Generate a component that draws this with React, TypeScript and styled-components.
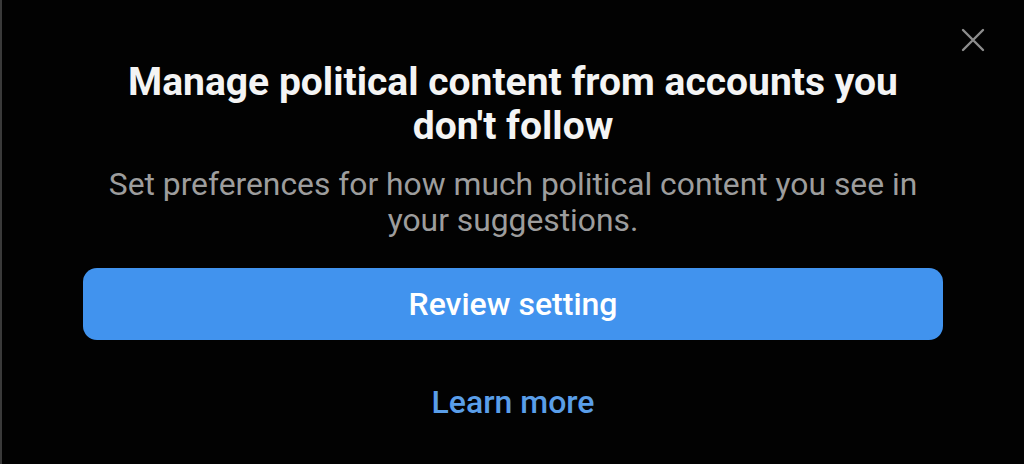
import React from "react";
import styled, { createGlobalStyle } from "styled-components";

const GlobalStyle = createGlobalStyle`
  html, body {
    margin: 0;
    padding: 0;
    background: #000;
  }
  body {
    font-family: Roboto, "Noto Sans", sans-serif;
  }
`;

const Sheet = styled.div`
  position: relative;
  box-sizing: border-box;
  width: 1024px;
  height: 464px;
  background: #020202;
  border-left: 2px solid #3a3a3a;
  display: flex;
  flex-direction: column;
  align-items: center;
  padding: 60px 81px 0 81px;
`;

const CloseButton = styled.button`
  position: absolute;
  top: 28px;
  right: 39px;
  width: 24px;
  height: 24px;
  padding: 0;
  border: none;
  background: none;
  color: #8d8d8d;
  cursor: pointer;
`;

const Title = styled.h2`
  margin: 0;
  width: 820px;
  font-size: 39px;
  line-height: 44px;
  font-weight: 700;
  color: #f4f4f4;
  text-align: center;
`;

const Subtitle = styled.p`
  margin: 18px 0 0;
  width: 830px;
  font-size: 31.8px;
  line-height: 36px;
  font-weight: 400;
  color: #9d9d9d;
  text-align: center;
`;

const PrimaryButton = styled.button`
  margin-top: 30px;
  width: 100%;
  height: 72px;
  border: none;
  border-radius: 14px;
  background: #4193ee;
  color: #fff;
  font-family: inherit;
  font-size: 32px;
  font-weight: 500;
  cursor: pointer;
`;

const LinkButton = styled.button`
  margin-top: 42px;
  border: none;
  background: none;
  padding: 0;
  color: #5a9ee9;
  font-family: inherit;
  font-size: 32px;
  line-height: 40px;
  font-weight: 500;
  cursor: pointer;
`;

const App = () => {
  return (
    <>
      <GlobalStyle />
      <Sheet>
        <CloseButton aria-label="Close">
          <svg width="24" height="24" viewBox="0 0 24 24" fill="none">
            <path
              d="M2 2L22 22M22 2L2 22"
              stroke="currentColor"
              strokeWidth="2.4"
              strokeLinecap="round"
            />
          </svg>
        </CloseButton>
        <Title>Manage political content from accounts you don't follow</Title>
        <Subtitle>
          Set preferences for how much political content you see in your
          suggestions.
        </Subtitle>
        <PrimaryButton>Review setting</PrimaryButton>
        <LinkButton>Learn more</LinkButton>
      </Sheet>
    </>
  );
};

export default App;
